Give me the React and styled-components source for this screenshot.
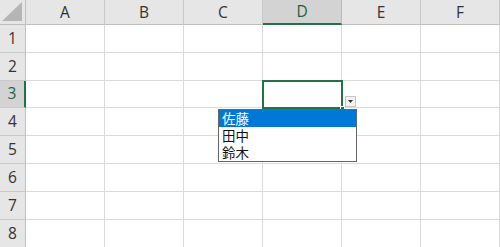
import React from "react";
import styled, { createGlobalStyle } from "styled-components";

const Global = createGlobalStyle`
  html, body { margin: 0; padding: 0; background: #fff; overflow: hidden; }
  body { font-family: "Open Sans", "Noto Sans", sans-serif; }
`;

const COLS = ["A", "B", "C", "D", "E", "F"];
const ROW_H = [28, 28, 27, 28, 28, 28, 28, 28];

const Sheet = styled.div`
  position: relative;
  width: 500px;
  height: 247px;
  overflow: hidden;
  display: grid;
  grid-template-columns: 26px repeat(6, 79px);
  grid-template-rows: 25px ${ROW_H.map((h) => h + "px").join(" ")};
`;

const Corner = styled.div`
  background: #e6e6e6;
  border-right: 1px solid #bfbfbf;
  border-bottom: 1px solid #bfbfbf;
  display: flex;
  align-items: flex-end;
  justify-content: flex-end;
  padding: 0 3px 3px 0;
`;

const ColHead = styled.div`
  background: ${(p) => (p.$sel ? "#d3d3d3" : "#e6e6e6")};
  border-right: 1px solid ${(p) => (p.$sel ? "#bababa" : "#c9c9c9")};
  border-bottom: ${(p) => (p.$sel ? "2px solid #217346" : "1px solid #bfbfbf")};
  color: ${(p) => (p.$sel ? "#21633e" : "#333")};
  font-size: 15.5px;
  display: flex;
  align-items: center;
  justify-content: center;
  line-height: 1;
  padding-top: 1px;
`;

const RowHead = styled.div`
  background: ${(p) => (p.$sel ? "#d3d3d3" : "#e6e6e6")};
  border-right: ${(p) => (p.$sel ? "2px solid #217346" : "1px solid #bfbfbf")};
  border-bottom: 1px solid #c9c9c9;
  color: ${(p) => (p.$sel ? "#21633e" : "#333")};
  font-size: 15.5px;
  display: flex;
  align-items: center;
  justify-content: center;
  line-height: 1;
`;

const Cell = styled.div`
  border-right: 1px solid #dadada;
  border-bottom: 1px solid #dadada;
  background: #fff;
`;

const Selection = styled.div`
  position: absolute;
  left: 262px;
  top: 80px;
  width: 81px;
  height: 29px;
  box-sizing: border-box;
  border: 2px solid #217346;
`;

const FillHandle = styled.div`
  position: absolute;
  right: -4px;
  bottom: -4px;
  width: 5px;
  height: 5px;
  background: #217346;
  border: 1px solid #fff;
  box-sizing: border-box;
`;

const DropBtn = styled.div`
  position: absolute;
  left: 81px;
  top: 14px;
  width: 11px;
  height: 11px;
  box-sizing: border-box;
  background: #f2f2f2;
  border: 1px solid #c6c6c6;
  display: flex;
  align-items: center;
  justify-content: center;
`;

const List = styled.ul`
  position: absolute;
  left: 218px;
  top: 109px;
  width: 139px;
  margin: 0;
  padding: 0;
  list-style: none;
  background: #fff;
  border: 1px solid #646464;
  box-sizing: border-box;
  display: flex;
  flex-direction: column;
  font-family: "Noto Sans CJK JP", "Noto Sans", sans-serif;
`;

const Item = styled.li`
  height: 17px;
  display: flex;
  align-items: center;
  padding-left: 3px;
  font-size: 13.5px;
  line-height: 1;
  color: ${(p) => (p.$active ? "#fff" : "#111")};
  background: ${(p) => (p.$active ? "#0078d7" : "transparent")};
`;

export default function App() {
  return (
    <>
      <Global />
      <Sheet>
        <Corner>
          <svg width="20" height="19" viewBox="0 0 20 19">
            <polygon points="20,0 20,19 0,19" fill="#b5b5b5" />
          </svg>
        </Corner>
        {COLS.map((c) => (
          <ColHead key={c} $sel={c === "D"}>
            {c}
          </ColHead>
        ))}
        {ROW_H.map((_, r) => (
          <React.Fragment key={r}>
            <RowHead $sel={r === 2}>{r + 1}</RowHead>
            {COLS.map((c) => (
              <Cell key={c} />
            ))}
          </React.Fragment>
        ))}
        <Selection>
          <FillHandle />
          <DropBtn>
            <svg width="5" height="3" viewBox="0 0 5 3">
              <polygon points="0,0 5,0 2.5,3" fill="#333" />
            </svg>
          </DropBtn>
        </Selection>
        <List>
          <Item $active>佐藤</Item>
          <Item>田中</Item>
          <Item>鈴木</Item>
        </List>
      </Sheet>
    </>
  );
}
